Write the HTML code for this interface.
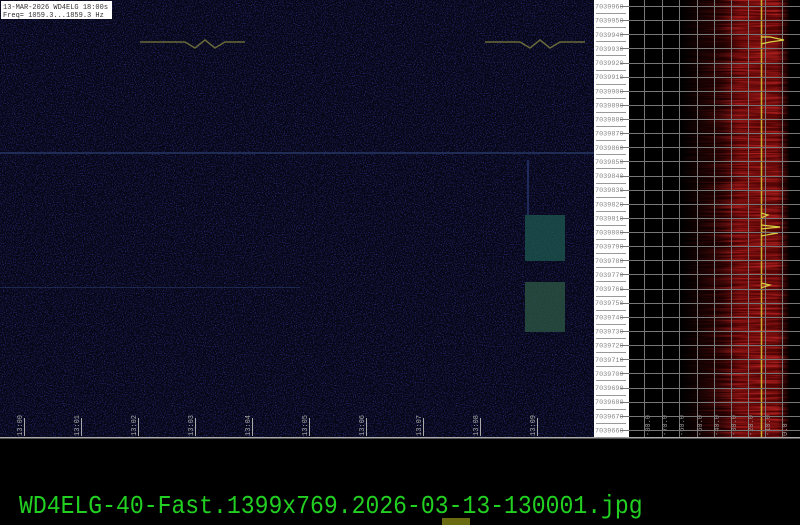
<!DOCTYPE html>
<html><head><meta charset="utf-8"><style>
html,body{margin:0;padding:0;background:#000;width:800px;height:525px;overflow:hidden}
svg{position:absolute;left:0;top:0}
.fn{position:absolute;left:19px;top:494px;font-family:"Liberation Mono",monospace;font-size:23.1px;color:#22d022;white-space:pre;transform:scaleY(1.12);transform-origin:0 0;line-height:1}
</style></head><body>
<svg width="800" height="525" xmlns="http://www.w3.org/2000/svg">
<defs>
<filter id="n" x="0" y="0" width="100%" height="100%">
<feTurbulence type="fractalNoise" baseFrequency="0.9" numOctaves="1" seed="3"/>
<feColorMatrix values="0 0 0 0 0.04  0 0 0 0 0.05  0 0 0 0 0.42  0 0 0 -3 1.55"/>
</filter>
<filter id="r" x="0" y="0" width="100%" height="100%">
<feTurbulence type="fractalNoise" baseFrequency="0.02 0.6" numOctaves="2" seed="5"/>
<feColorMatrix values="0 0 0 0 0.55  0 0 0 0 0.02  0 0 0 0 0.02  0 0 0 -2.5 1.6"/>
</filter>
<linearGradient id="mg" x1="0" x2="1">
<stop offset="0" stop-color="#fff" stop-opacity="0"/>
<stop offset="0.35" stop-color="#fff" stop-opacity="0.35"/>
<stop offset="0.55" stop-color="#fff" stop-opacity="1"/>
<stop offset="0.88" stop-color="#fff" stop-opacity="1"/>
<stop offset="1" stop-color="#fff" stop-opacity="0"/>
</linearGradient>
<mask id="m" maskUnits="userSpaceOnUse" x="680" y="0" width="110" height="437"><rect x="680" y="0" width="110" height="437" fill="url(#mg)"/></mask>
<linearGradient id="rb" x1="0" x2="1">
<stop offset="0" stop-color="#500" stop-opacity="0"/>
<stop offset="0.4" stop-color="#600" stop-opacity="0.4"/>
<stop offset="0.55" stop-color="#6a0505"/>
<stop offset="0.88" stop-color="#6a0505"/>
<stop offset="1" stop-color="#500" stop-opacity="0"/>
</linearGradient>
</defs>
<rect x="0" y="0" width="800" height="525" fill="#000"/>
<rect x="0" y="0" width="594" height="437" fill="#060614"/>
<rect x="0" y="0" width="594" height="437" filter="url(#n)" opacity="0.75"/>
<rect x="0" y="152" width="594" height="2" fill="#2a3a6a" opacity="0.7"/>
<rect x="0" y="287" width="300" height="1" fill="#2a3a6a" opacity="0.6"/>
<rect x="525" y="215" width="40" height="46" fill="#1e5a50" opacity="0.75"/>
<rect x="525" y="282" width="40" height="50" fill="#2e5a44" opacity="0.75"/>
<rect x="527" y="160" width="2" height="55" fill="#1e2a5a"/>
<polyline points="140,42 185,42 195,48 205,40 215,48 225,42 245,42" fill="none" stroke="#6a6a3a" stroke-width="1.5"/>
<polyline points="485,42 520,42 530,48 540,40 550,48 560,42 585,42" fill="none" stroke="#6a6a3a" stroke-width="1.5"/>
<rect x="1" y="1" width="111" height="18" fill="#fff"/>
<text x="3" y="9" font-family="Liberation Mono,monospace" font-size="7" fill="#333">13-MAR-2026  WD4ELG  18:00s</text>
<text x="3" y="17" font-family="Liberation Mono,monospace" font-size="7" fill="#333">Freq= 1059.3...1859.3 Hz</text>
<g font-family="Liberation Mono,monospace" font-size="7" fill="#aaa">
<g transform="translate(22,436) rotate(-90)"><text>13:00</text></g>
<g transform="translate(79,436) rotate(-90)"><text>13:01</text></g>
<g transform="translate(136,436) rotate(-90)"><text>13:02</text></g>
<g transform="translate(193,436) rotate(-90)"><text>13:03</text></g>
<g transform="translate(250,436) rotate(-90)"><text>13:04</text></g>
<g transform="translate(307,436) rotate(-90)"><text>13:05</text></g>
<g transform="translate(364,436) rotate(-90)"><text>13:06</text></g>
<g transform="translate(421,436) rotate(-90)"><text>13:07</text></g>
<g transform="translate(478,436) rotate(-90)"><text>13:08</text></g>
<g transform="translate(535,436) rotate(-90)"><text>13:09</text></g>
</g>
<path d="M24.5 418V436M81.5 418V436M138.5 418V436M195.5 418V436M252.5 418V436M309.5 418V436M366.5 418V436M423.5 418V436M480.5 418V436M537.5 418V436" stroke="#aaa"/>
<rect x="0" y="437" width="800" height="1.5" fill="#aaa"/>
<rect x="594" y="0" width="35" height="437" fill="#fff"/>
<rect x="629" y="0" width="171" height="437" fill="#000"/>
<rect x="680" y="0" width="110" height="437" fill="url(#rb)" opacity="0.8"/>
<g mask="url(#m)"><rect x="680" y="0" width="110" height="437" filter="url(#r)" opacity="0.8"/></g>
<path d="M644.5 0V437M662.5 0V437M679.5 0V437M697.5 0V437M714.5 0V437M731.5 0V437M748.5 0V437M765.5 0V437M782.5 0V437" stroke="#777" stroke-width="1"/>
<path d="M761.5 0V437" stroke="#c8b030" stroke-width="1.5"/>
<path d="M761 37L770 37L784 40L770 42L761 44M761 213L768 215L761 218M761 225L780 227L761 229M761 232L778 233L761 236M761 283L770 285L761 288" stroke="#d8d040" stroke-width="1.2" fill="none"/>
<g font-family="Liberation Mono,monospace" font-size="7" fill="#999">
<g transform="translate(650,436) rotate(-90)"><text>-80.0</text></g>
<g transform="translate(667,436) rotate(-90)"><text>-70.0</text></g>
<g transform="translate(684,436) rotate(-90)"><text>-60.0</text></g>
<g transform="translate(702,436) rotate(-90)"><text>-50.0</text></g>
<g transform="translate(719,436) rotate(-90)"><text>-40.0</text></g>
<g transform="translate(736,436) rotate(-90)"><text>-30.0</text></g>
<g transform="translate(753,436) rotate(-90)"><text>-20.0</text></g>
<g transform="translate(770,436) rotate(-90)"><text>-10.0</text></g>
<g transform="translate(787,436) rotate(-90)"><text>0.0</text></g>
</g>
</svg>
<svg width="800" height="525" xmlns="http://www.w3.org/2000/svg" id="lab"></svg>
<div class="fn">WD4ELG-40-Fast.1399x769.2026-03-13-130001.jpg</div>
<div style="position:absolute;left:442px;top:518px;width:28px;height:7px;background:#6a6a10"></div>
<script>
(function(){
var s=document.getElementById('lab'),h='';
for(var i=0;i<31;i++){
 var y=6+i*14.13,f=7039960-i*10;
 h+='<text x="595" y="'+(y+2.5)+'" font-family="Liberation Mono,monospace" font-size="6.8" fill="#888">'+f+'</text>';
 h+='<path d="M620 '+(Math.round(y)+0.5)+'H800" stroke="#777" stroke-width="1"/>';
 h+='<path d="M596 '+(Math.round(y)+7.5)+'H626" stroke="#999" stroke-width="1"/>';
}
s.innerHTML=h;
})();
</script>
</body></html>
